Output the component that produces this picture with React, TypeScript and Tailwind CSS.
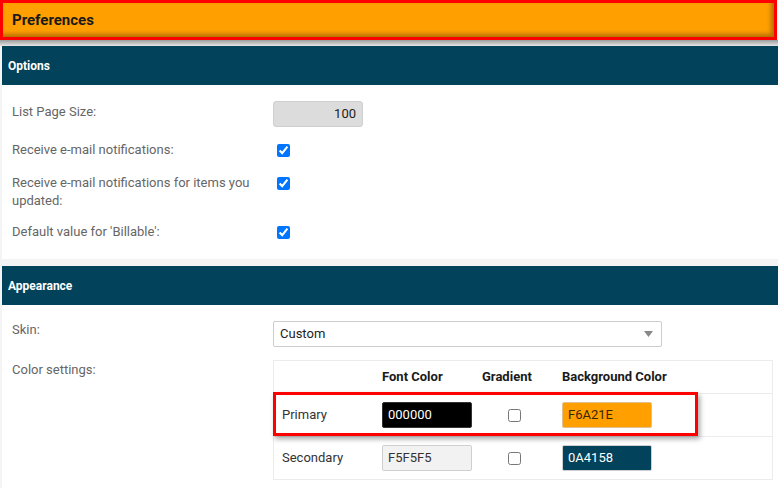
import React from 'react';

const Checkbox = ({ checked = false }: { checked?: boolean }) => (
  <input
    type="checkbox"
    defaultChecked={checked}
    className="m-0 h-[13px] w-[13px] accent-[#0075ff]"
  />
);

const SectionBar = ({ title }: { title: string }) => (
  <div className="flex h-[39px] items-center bg-[#02425a] pl-[6px] text-[12px] font-bold text-white">
    {title}
  </div>
);

const FormRow = ({
  label,
  children,
  labelPad = 'pt-0',
}: {
  label: React.ReactNode;
  children: React.ReactNode;
  labelPad?: string;
}) => (
  <div className="flex items-start">
    <div className={`w-[261px] shrink-0 pr-[14px] text-[13px] leading-[18px] text-[#666] ${labelPad}`}>
      {label}
    </div>
    <div>{children}</div>
  </div>
);

const ColorInput = ({ value, className }: { value: string; className: string }) => (
  <div className={`flex h-[26px] w-[90px] items-center rounded-[2px] border pl-[5px] text-[13px] ${className}`}>
    {value}
  </div>
);

export default function App() {
  return (
    <div className="h-[488px] w-[778px] overflow-hidden bg-[#f4f4f4] font-['Roboto',sans-serif]">
      {/* page title, with the red highlight round it */}
      <div className="h-[40px] w-[777px] border-[3px] border-[#ff0000] bg-[#ff9f00] shadow-[inset_-3px_-3px_4px_rgba(90,50,0,0.45)]">
        <div className="flex h-full items-center pl-[9px] text-[15px] font-bold text-[#1a1a1a]">
          Preferences
        </div>
      </div>
      <div className="h-[6px] bg-gradient-to-b from-[#9c9c9c] to-[#e6e6e6]" />

      <div className="ml-[2px]">
        <SectionBar title="Options" />
        <div className="flex flex-col bg-white pb-[18px] pl-[10px] pt-[16px]">
          <FormRow label="List Page Size:" labelPad="pt-[2px]">
            <div className="flex h-[26px] w-[90px] items-center justify-end rounded-[3px] border border-[#cfcfcf] bg-[#dcdcdc] pr-[6px] text-[13px] text-[#222]">
              100
            </div>
          </FormRow>
          <div className="mt-[14px]">
            <FormRow label="Receive e-mail notifications:">
              <div className="flex h-[18px] items-center pl-[4px]">
                <Checkbox checked />
              </div>
            </FormRow>
          </div>
          <div className="mt-[15px]">
            <FormRow label="Receive e-mail notifications for items you updated:">
              <div className="flex h-[18px] items-center pl-[4px]">
                <Checkbox checked />
              </div>
            </FormRow>
          </div>
          <div className="mt-[13px]">
            <FormRow label="Default value for 'Billable':">
              <div className="flex h-[18px] items-center pl-[4px]">
                <Checkbox checked />
              </div>
            </FormRow>
          </div>
        </div>

        <div className="h-[7px]" />

        <SectionBar title="Appearance" />
        <div className="flex h-[183px] flex-col bg-white pl-[10px] pt-[16px]">
          <FormRow label="Skin:">
            <div className="flex h-[26px] w-[389px] items-center justify-between rounded-[2px] border border-[#cccccc] pl-[6px] pr-[8px] text-[13px] text-[#222]">
              <span>Custom</span>
              <svg width="9" height="6" viewBox="0 0 9 6">
                <path d="M0 0h9L4.5 6z" fill="#888" />
              </svg>
            </div>
          </FormRow>
          <div className="mt-[13px]">
            <FormRow label="Color settings:" labelPad="pt-[1px]">
              <div className="w-[500px] border border-[#ececec] text-[13px]">
                <div className="grid h-[33px] grid-cols-[100px_100px_80px_1fr] items-center border-b border-[#ececec] font-bold text-[#1a1a1a]">
                  <div />
                  <div className="pl-[8px]">Font Color</div>
                  <div className="pl-[8px]">Gradient</div>
                  <div className="pl-[8px]">Background Color</div>
                </div>
                <div className="relative grid h-[43px] grid-cols-[100px_100px_80px_1fr] items-center border-b border-[#ececec] text-[#333]">
                  <div className="pl-[8px]">Primary</div>
                  <div className="pl-[8px]">
                    <ColorInput value="000000" className="border-[#333] bg-black text-white" />
                  </div>
                  <div className="flex justify-center">
                    <Checkbox />
                  </div>
                  <div className="pl-[8px]">
                    <ColorInput value="F6A21E" className="border-[#e0c090] bg-[#ff9f00] text-[#3a2605]" />
                  </div>
                  <div className="pointer-events-none absolute left-[-1px] top-[-2px] h-[44px] w-[425px] border-[3px] border-[#ff0000] shadow-[2px_3px_5px_rgba(0,0,0,0.35)]" />
                </div>
                <div className="grid h-[42px] grid-cols-[100px_100px_80px_1fr] items-center text-[#333]">
                  <div className="pl-[8px]">Secondary</div>
                  <div className="pl-[8px]">
                    <ColorInput value="F5F5F5" className="border-[#cfcfcf] bg-[#f2f2f2] text-[#333]" />
                  </div>
                  <div className="flex justify-center">
                    <Checkbox />
                  </div>
                  <div className="pl-[8px]">
                    <ColorInput value="0A4158" className="border-[#cfcfcf] bg-[#02425a] text-white" />
                  </div>
                </div>
              </div>
            </FormRow>
          </div>
        </div>
      </div>
    </div>
  );
}
